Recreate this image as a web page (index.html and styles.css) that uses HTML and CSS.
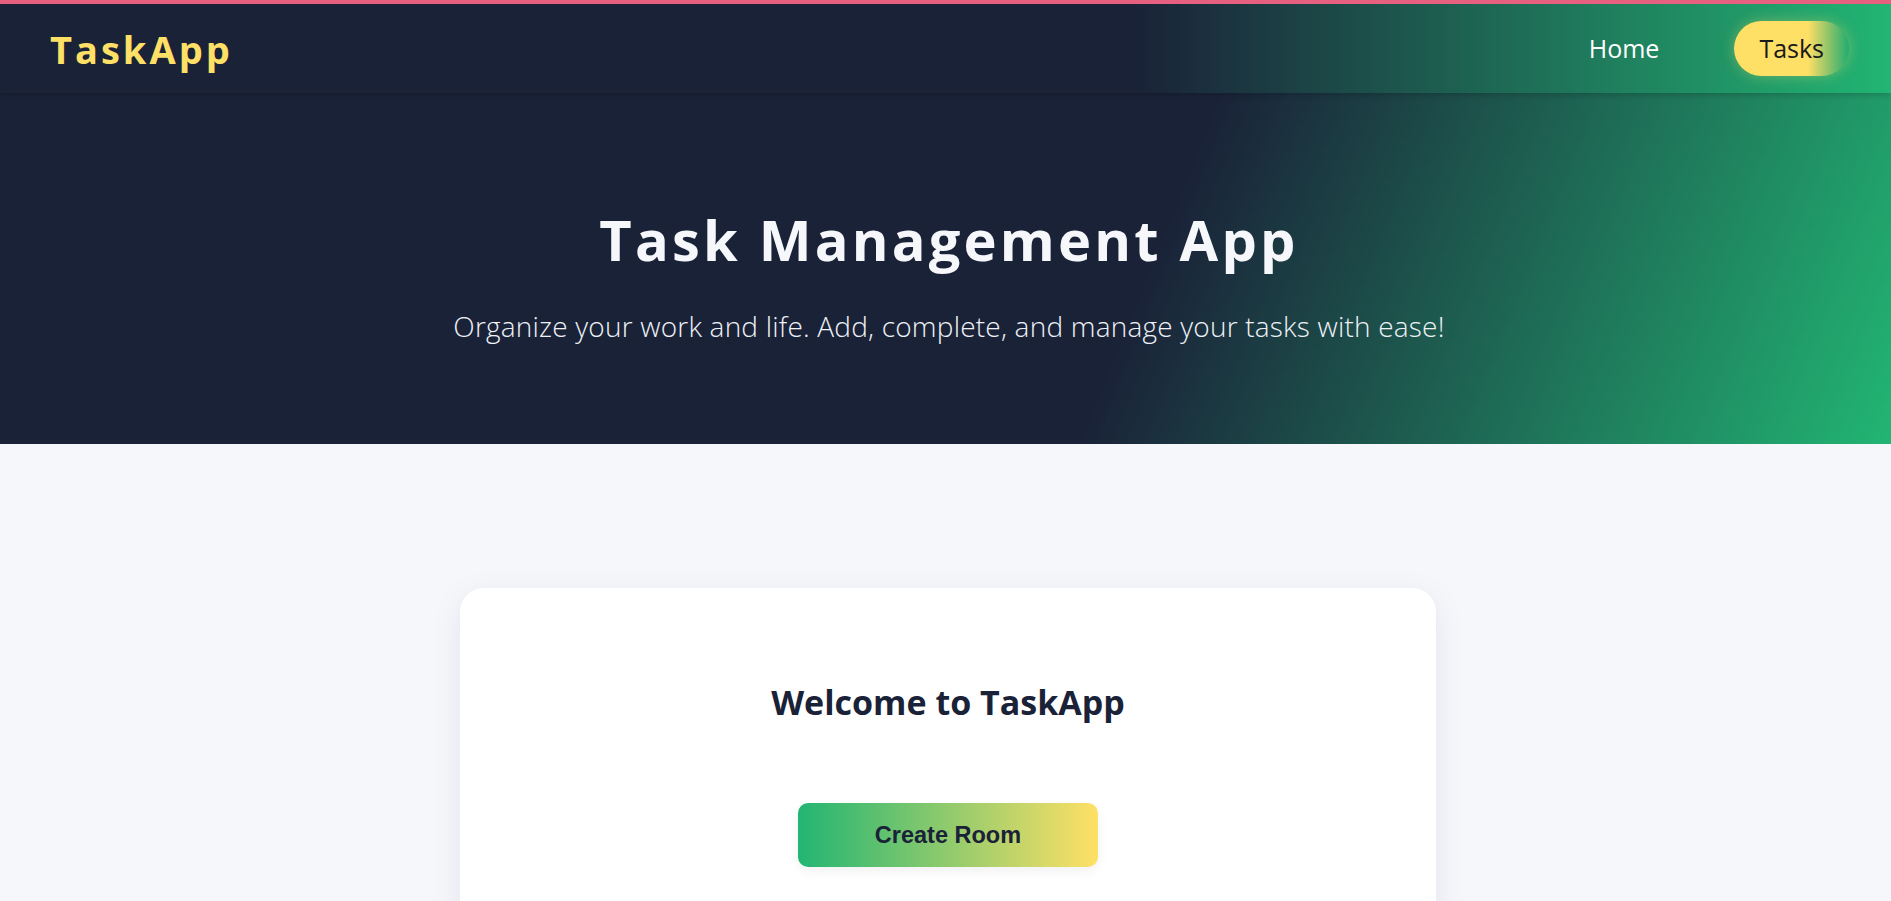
FILE: index.html
```html
<!DOCTYPE html>
<html lang="en">
<head>
<meta charset="UTF-8">
<title>TaskApp</title>
<link rel="stylesheet" href="styles.css">
</head>
<body>
<header class="site-header">
  <nav class="navbar">
    <a class="logo" href="#">TaskApp</a>
    <ul class="nav-links">
      <li><a class="nav-link" href="#">Home</a></li>
      <li><a class="nav-link active" href="#">Tasks</a></li>
    </ul>
  </nav>
  <section class="hero">
    <h1 class="hero-title">Task Management App</h1>
    <p class="hero-subtitle">Organize your work and life. Add, complete, and manage your tasks with ease!</p>
  </section>
</header>
<main class="main">
  <div class="card">
    <h2 class="card-title">Welcome to TaskApp</h2>
    <button class="btn-create" type="button">Create Room</button>
  </div>
</main>
</body>
</html>
```

FILE: styles.css
```css
* { box-sizing: border-box; }

body {
  margin: 0;
  background: #f5f7fb;
  font-family: "Open Sans", "Noto Sans", sans-serif;
  border-top: 4px solid #e8607f;
}

.navbar {
  position: relative;
  z-index: 2;
  height: 89px;
  display: flex;
  align-items: center;
  justify-content: space-between;
  padding: 0 42px 0 50px;
  background: linear-gradient(90deg, #1a2238 60%, #22b573 100%);
  box-shadow: 0 2px 6px rgba(0, 0, 0, 0.18);
}

.logo {
  color: #ffe066;
  font-size: 38px;
  font-weight: 700;
  letter-spacing: 3px;
  text-decoration: none;
}

.nav-links {
  list-style: none;
  margin: 0;
  padding: 0;
  display: flex;
  align-items: center;
  gap: 50px;
}

.nav-link {
  display: block;
  padding: 11px 25px;
  border-radius: 30px;
  color: #ffffff;
  font-size: 25px;
  line-height: 33px;
  text-decoration: none;
}

.nav-link.active {
  color: #1a1a1a;
  background: linear-gradient(90deg, #ffe066 0%, #ffe066 64%, rgba(255, 224, 102, 0) 100%);
  box-shadow: 0 0 14px rgba(255, 224, 102, 0.35);
}

.hero {
  height: 351px;
  padding: 113px 0 0 7px;
  text-align: center;
  background: linear-gradient(112deg, #1a2238 60%, #22b573 100%);
}

.hero-title {
  margin: 0;
  color: #f5f7fa;
  font-size: 56px;
  line-height: 1.2;
  font-weight: 700;
  letter-spacing: 3.2px;
}

.hero-subtitle {
  margin: 34px 0 0;
  color: #eef1f6;
  font-size: 28px;
  line-height: 1.4;
  font-weight: 300;
  letter-spacing: 0.2px;
}

.main {
  padding: 144px 0 0 5px;
}

.card {
  width: 976px;
  margin: 0 auto;
  padding: 94px 40px 80px;
  background: #ffffff;
  border-radius: 24px;
  box-shadow: 0 8px 32px rgba(20, 30, 60, 0.08);
  text-align: center;
}

.card-title {
  margin: 0 0 80px;
  color: #1a2238;
  font-size: 34px;
  line-height: 1.2;
  font-weight: 700;
}

.btn-create {
  display: block;
  margin: 0 auto;
  width: 300px;
  padding: 18px 0;
  border: none;
  border-radius: 10px;
  background: linear-gradient(90deg, #22b573, #ffe066);
  color: #1a2238;
  font-family: "Liberation Sans", Arial, sans-serif;
  font-size: 23.5px;
  line-height: 28px;
  font-weight: 700;
  box-shadow: 0 4px 12px rgba(0, 0, 0, 0.06);
  cursor: pointer;
}
```
